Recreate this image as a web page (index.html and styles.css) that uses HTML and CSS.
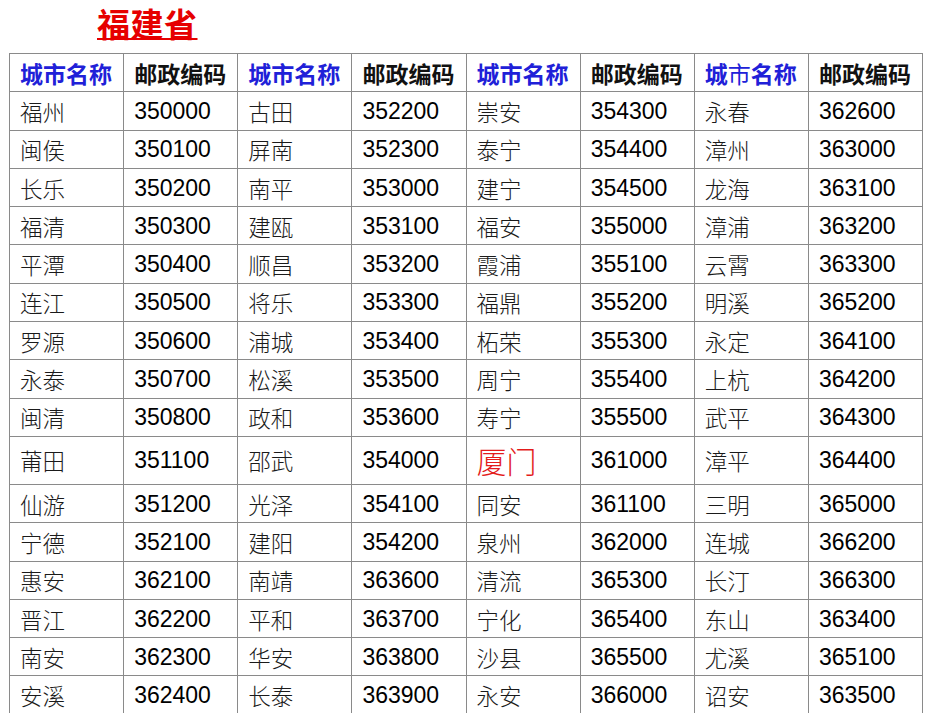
FILE: index.html
```html
<!DOCTYPE html>
<html lang="zh-CN">
<head>
<meta charset="utf-8">
<title>福建省邮政编码</title>
<link rel="stylesheet" href="styles.css">
</head>
<body>
<div class="title-bar"><span class="title">福建省</span></div>
<table class="codes">
<colgroup><col><col><col><col><col><col><col><col></colgroup>
<tr class="head">
<td class="h">城市名称</td><td class="hk">邮政编码</td>
<td class="h">城市名称</td><td class="hk">邮政编码</td>
<td class="h">城市名称</td><td class="hk">邮政编码</td>
<td class="h">城<span class="thin">市</span>名称</td><td class="hk">邮政编码</td>
</tr>
<tr><td class="c">福州</td><td class="n">350000</td><td class="c">古田</td><td class="n">352200</td><td class="c">崇安</td><td class="n">354300</td><td class="c">永春</td><td class="n">362600</td></tr>
<tr><td class="c">闽侯</td><td class="n">350100</td><td class="c">屏南</td><td class="n">352300</td><td class="c">泰宁</td><td class="n">354400</td><td class="c">漳州</td><td class="n">363000</td></tr>
<tr><td class="c">长乐</td><td class="n">350200</td><td class="c">南平</td><td class="n">353000</td><td class="c">建宁</td><td class="n">354500</td><td class="c">龙海</td><td class="n">363100</td></tr>
<tr><td class="c">福清</td><td class="n">350300</td><td class="c">建瓯</td><td class="n">353100</td><td class="c">福安</td><td class="n">355000</td><td class="c">漳浦</td><td class="n">363200</td></tr>
<tr><td class="c">平潭</td><td class="n">350400</td><td class="c">顺昌</td><td class="n">353200</td><td class="c">霞浦</td><td class="n">355100</td><td class="c">云霄</td><td class="n">363300</td></tr>
<tr><td class="c">连江</td><td class="n">350500</td><td class="c">将乐</td><td class="n">353300</td><td class="c">福鼎</td><td class="n">355200</td><td class="c">明溪</td><td class="n">365200</td></tr>
<tr><td class="c">罗源</td><td class="n">350600</td><td class="c">浦城</td><td class="n">353400</td><td class="c">柘荣</td><td class="n">355300</td><td class="c">永定</td><td class="n">364100</td></tr>
<tr><td class="c">永泰</td><td class="n">350700</td><td class="c">松溪</td><td class="n">353500</td><td class="c">周宁</td><td class="n">355400</td><td class="c">上杭</td><td class="n">364200</td></tr>
<tr><td class="c">闽清</td><td class="n">350800</td><td class="c">政和</td><td class="n">353600</td><td class="c">寿宁</td><td class="n">355500</td><td class="c">武平</td><td class="n">364300</td></tr>
<tr class="tall"><td class="c">莆田</td><td class="n">351100</td><td class="c">邵武</td><td class="n">354000</td><td class="c big">厦门</td><td class="n">361000</td><td class="c">漳平</td><td class="n">364400</td></tr>
<tr><td class="c">仙游</td><td class="n">351200</td><td class="c">光泽</td><td class="n">354100</td><td class="c">同安</td><td class="n">361100</td><td class="c">三明</td><td class="n">365000</td></tr>
<tr><td class="c">宁德</td><td class="n">352100</td><td class="c">建阳</td><td class="n">354200</td><td class="c">泉州</td><td class="n">362000</td><td class="c">连城</td><td class="n">366200</td></tr>
<tr><td class="c">惠安</td><td class="n">362100</td><td class="c">南靖</td><td class="n">363600</td><td class="c">清流</td><td class="n">365300</td><td class="c">长汀</td><td class="n">366300</td></tr>
<tr><td class="c">晋江</td><td class="n">362200</td><td class="c">平和</td><td class="n">363700</td><td class="c">宁化</td><td class="n">365400</td><td class="c">东山</td><td class="n">363400</td></tr>
<tr><td class="c">南安</td><td class="n">362300</td><td class="c">华安</td><td class="n">363800</td><td class="c">沙县</td><td class="n">365500</td><td class="c">尤溪</td><td class="n">365100</td></tr>
<tr><td class="c">安溪</td><td class="n">362400</td><td class="c">长泰</td><td class="n">363900</td><td class="c">永安</td><td class="n">366000</td><td class="c">诏安</td><td class="n">363500</td></tr>
</table>
</body>
</html>
```
FILE: styles.css
```css
html, body {
  margin: 0;
  padding: 0;
  background: #ffffff;
}
body {
  font-family: "Liberation Sans", "Noto Sans CJK SC", sans-serif;
  overflow: hidden;
}
.title-bar {
  height: 53px;
  padding-left: 97px;
  box-sizing: border-box;
  line-height: 46px;
}
.title {
  font-family: "Noto Sans CJK SC", sans-serif;
  font-size: 33px;
  font-weight: 700;
  color: #e60000;
  text-decoration: underline;
  text-decoration-thickness: 2px;
  text-underline-offset: 1px;
  letter-spacing: 0.5px;
}
.codes {
  margin-left: 9px;
  width: 914px;
  table-layout: fixed;
  border-collapse: collapse;
}
.codes col {
  width: 12.5%;
}
.codes tr {
  height: 38.3px;
}
.codes tr.tall {
  height: 48px;
}
.codes td {
  border: 1px solid #8a8a8a;
  padding: 0 0 0 10px;
  vertical-align: middle;
  white-space: nowrap;
  overflow: hidden;
}
.h {
  font-family: "Noto Sans CJK SC", sans-serif;
  font-size: 23px;
  font-weight: 700;
  color: #2020d8;
  line-height: 36px;
}
.h .thin {
  font-weight: 400;
}
.hk {
  font-family: "Noto Sans CJK SC", sans-serif;
  font-size: 23px;
  font-weight: 700;
  color: #111111;
  line-height: 36px;
}
.c {
  font-family: "Noto Sans CJK SC", sans-serif;
  font-size: 22.5px;
  font-weight: 300;
  color: #1a1a1a;
  line-height: 36px;
  padding-bottom: 2px;
}
.c.big {
  font-size: 30px;
  color: #e31b1b;
  line-height: 44px;
}
.n {
  font-family: "Liberation Sans", Arial, sans-serif;
  font-size: 23px;
  color: #000000;
  line-height: 36px;
}
```
